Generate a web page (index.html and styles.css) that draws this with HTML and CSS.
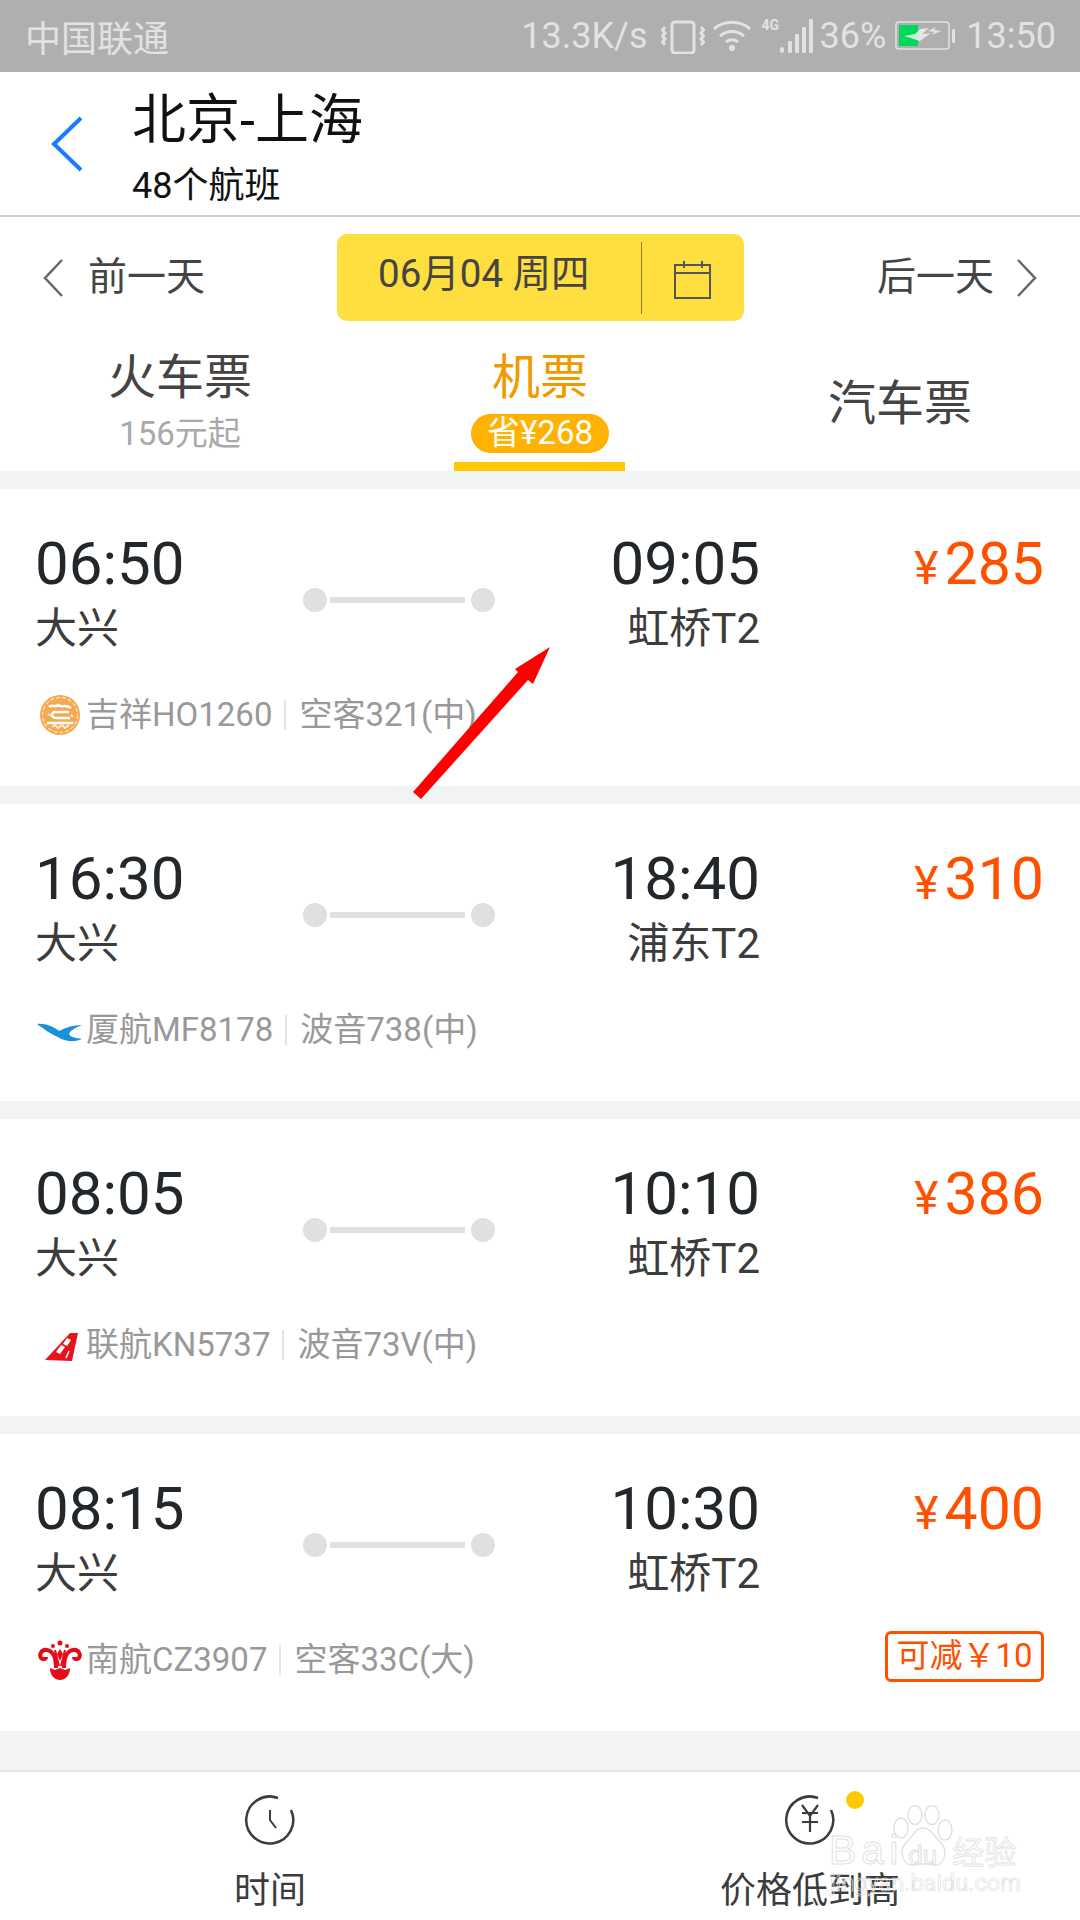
FILE: index.html
```html
<!DOCTYPE html>
<html lang="zh">
<head>
<meta charset="utf-8">
<title>北京-上海</title>
<link rel="stylesheet" href="styles.css">
</head>
<body>
<div class="page">
  <div class="status">
    <span class="carrier">中国联通</span>
    <div class="status-right">
      <span class="speed">13.3K/s</span>
      <svg class="si-vib" width="44" height="34" viewBox="0 0 44 34" fill="none" stroke="#e2e2e2" stroke-width="3"><rect x="11" y="2" width="22" height="31" rx="3"/><path d="M4 7l-2.500 3 2.500 3-2.500 3 2.500 3-2.500 3 2.500 3M40 7l2.500 3-2.500 3 2.500 3-2.500 3 2.500 3-2.500 3"/></svg>
      <svg class="si-wifi" width="40" height="32" viewBox="0 0 40 32" fill="none" stroke="#e2e2e2" stroke-width="3"><path d="M2 9c10-9 26-9 36 0M8 16c7-6 17-6 24 0M14 22c3-3 9-3 12 0"/><circle cx="20" cy="28" r="3" fill="#e2e2e2" stroke="none"/></svg>
      <span class="net">4G</span>
      <svg class="si-sig" width="34" height="34" viewBox="0 0 34 34" fill="#e2e2e2"><rect x="0" y="28" width="4" height="6" rx="2"/><rect x="8" y="22" width="4" height="12" rx="1"/><rect x="15" y="15" width="4" height="19" rx="1"/><rect x="22" y="8" width="4" height="26" rx="1"/><rect x="29" y="0" width="4" height="34" rx="1"/></svg>
      <span class="pct">36%</span>
      <svg class="si-bat" width="60" height="30" viewBox="0 0 60 30"><rect x="1" y="1" width="53" height="27" rx="3" fill="none" stroke="#e2e2e2" stroke-width="1.500"/><rect x="4" y="4" width="19" height="21" fill="#00d85c"/><path d="M9 15l16 5 11-8-9 1 7-6-9 1-5 5z" fill="#e8f5ec" opacity=".85"/><path d="M33 10l8-4-2 3 7 1-9 4 2-3z" fill="#e2e2e2"/><rect x="57" y="8" width="3" height="14" rx="1.500" fill="#e2e2e2"/></svg>
      <span class="clock">13:50</span>
    </div>
  </div>

  <header class="head">
    <svg class="back" width="34" height="56" viewBox="0 0 34 56" fill="none" stroke="#1a7bff" stroke-width="4"><path d="M31 2L4 28l27 26"/></svg>
    <div class="head-text">
      <div class="title">北京-上海</div>
      <div class="subtitle">48个航班</div>
    </div>
  </header>

  <div class="dates">
    <div class="day">
      <svg width="22" height="38" viewBox="0 0 22 38" fill="none" stroke="#666" stroke-width="2.500"><path d="M20 1L3 19l17 18"/></svg>
      <span class="day-text">前一天</span>
    </div>
    <div class="pill">
      <span class="pill-date">06月04 周四</span>
      <span class="pill-cal">
        <svg width="38" height="38" viewBox="0 0 38 38" fill="none" stroke="#555" stroke-width="2"><path d="M1 4h35v33H1zM1 12h35M10 0v7M28 0v7"/></svg>
      </span>
    </div>
    <div class="day day-next">
      <span class="day-text">后一天</span>
      <svg width="22" height="38" viewBox="0 0 22 38" fill="none" stroke="#666" stroke-width="2.500"><path d="M2 1l17 18L2 37"/></svg>
    </div>
  </div>

  <nav class="tabs">
    <div class="tab">
      <div class="tab-name">火车票</div>
      <div class="tab-note">156元起</div>
    </div>
    <div class="tab tab-on">
      <div class="tab-name">机票</div>
      <div class="tab-save">省¥268</div>
      <div class="tab-bar"></div>
    </div>
    <div class="tab tab-solo">
      <div class="tab-name">汽车票</div>
    </div>
  </nav>

  <section class="card">
    <div class="row">
      <div class="dep"><div class="time">06:50</div><div class="port">大兴</div></div>
      <div class="route"><i class="dot"></i><i class="line"></i><i class="dot"></i></div>
      <div class="arr"><div class="time">09:05</div><div class="port">虹桥T2</div></div>
      <div class="price"><span class="yen">¥</span>285</div>
    </div>
    <div class="meta">
      <svg class="logo" width="40" height="40" viewBox="0 0 40 40"><circle cx="20" cy="20" r="20" fill="#f2a94f"/><circle cx="20" cy="20" r="17.500" fill="none" stroke="#fbdcb2" stroke-width="1.500" stroke-dasharray="4 2"/><path d="M7 28h26M9 12c4-3 6 1 9-2 3 3 8-1 13 3M29 17H15c-4 0-4 6 1 6h14" fill="none" stroke="#fff" stroke-width="2.500"/><path d="M12 32l3-2 3 3 4-3 3 3 4-3M8 19l3 2M31 20l2 2" fill="none" stroke="#fde9cf" stroke-width="2"/></svg>
      <span>吉祥HO1260</span><i class="sep"></i><span>空客321(中)</span>
    </div>
  </section>

  <section class="card">
    <div class="row">
      <div class="dep"><div class="time">16:30</div><div class="port">大兴</div></div>
      <div class="route"><i class="dot"></i><i class="line"></i><i class="dot"></i></div>
      <div class="arr"><div class="time">18:40</div><div class="port">浦东T2</div></div>
      <div class="price"><span class="yen">¥</span>310</div>
    </div>
    <div class="meta">
      <svg class="logo" width="40" height="40" viewBox="0 0 40 40"><path d="M-3 14C5 13 14 17 19 21 26 17 34 15 42 15 34 18 30 21 29 24 30 27 36 28 42 29 32 33 24 31 18 27 12 25 4 19-3 14z" fill="#1a8fdc"/></svg>
      <span>厦航MF8178</span><i class="sep"></i><span>波音738(中)</span>
    </div>
  </section>

  <section class="card">
    <div class="row">
      <div class="dep"><div class="time">08:05</div><div class="port">大兴</div></div>
      <div class="route"><i class="dot"></i><i class="line"></i><i class="dot"></i></div>
      <div class="arr"><div class="time">10:10</div><div class="port">虹桥T2</div></div>
      <div class="price"><span class="yen">¥</span>386</div>
    </div>
    <div class="meta">
      <svg class="logo" width="40" height="40" viewBox="0 0 40 40"><path d="M5 35L30 8h8l-6 28z" fill="#e8141c"/><path d="M16 27l5-7 4 2-5 7zM23 19l4-6 4 2-4 6z" fill="#fff"/><path d="M26 33l3-7" stroke="#fff" stroke-width="1.500"/></svg>
      <span>联航KN5737</span><i class="sep"></i><span>波音73V(中)</span>
    </div>
  </section>

  <section class="card">
    <div class="row">
      <div class="dep"><div class="time">08:15</div><div class="port">大兴</div></div>
      <div class="route"><i class="dot"></i><i class="line"></i><i class="dot"></i></div>
      <div class="arr"><div class="time">10:30</div><div class="port">虹桥T2</div></div>
      <div class="price"><span class="yen">¥</span>400</div>
    </div>
    <div class="meta">
      <svg class="logo" width="40" height="40" viewBox="0 0 40 40" fill="none" stroke="#e60b18"><path d="M16 28C16 18 13 11 7 10 1 9-1 15 1 18 3 20 6 19 6 17" stroke-width="4"/><path d="M24 28C24 18 27 11 33 10 39 9 41 15 39 18 37 20 34 19 34 17" stroke-width="4"/><path d="M19 26L15 10M21 26L25 10" stroke-width="2"/><circle cx="20" cy="3" r="2.500" fill="#e60b18" stroke="none"/><circle cx="13" cy="6" r="2" fill="#e60b18" stroke="none"/><circle cx="27" cy="6" r="2" fill="#e60b18" stroke="none"/><path d="M20 9l3 5-3 7-3-7z" fill="#e60b18" stroke="none"/><path d="M10 28l5 2 5-2 5 2 5-2c0 8-5 12-10 12S10 36 10 28z" fill="#e60b18" stroke="none"/></svg>
      <span>南航CZ3907</span><i class="sep"></i><span>空客33C(大)</span>
      <span class="tag">可减￥10</span>
    </div>
  </section>

  <div class="spacer"></div>

  <footer class="foot">
    <div class="foot-item">
      <svg width="50" height="50" viewBox="0 0 50 50" fill="none" stroke="#3c3c3c" stroke-width="2.500"><path d="M33 3A23.500 23.500 0 1 0 46 15"/><path d="M25 15V25L31 33" stroke-width="2"/></svg>
      <span>时间</span>
    </div>
    <div class="foot-item">
      <span class="foot-icon">
        <svg width="50" height="50" viewBox="0 0 50 50" fill="none" stroke="#3c3c3c" stroke-width="2.500"><path d="M33 3A23.500 23.500 0 1 0 46 15"/><path d="M17 10l8 11 8-11M17 18h16M17 27h16M25 21v16" stroke-width="2.200"/></svg>
        <i class="badge"></i>
      </span>
      <span>价格低到高</span>
    </div>
  </footer>

  <svg class="arrow" width="145" height="158" viewBox="0 0 145 158"><path d="M140 4L123 41 118 37 11 156 3 149 108 29 105 26z" fill="#ff0000"/></svg>

  <div class="mark">
    <svg class="paw" width="60" height="63" viewBox="0 0 60 63" fill="none" stroke="#e2e2e2" stroke-width="1.500"><ellipse cx="8" cy="23" rx="7" ry="10"/><ellipse cx="22" cy="10" rx="7" ry="9.500"/><ellipse cx="39" cy="10" rx="7" ry="9.500"/><ellipse cx="52" cy="25" rx="7" ry="10"/><path d="M30 23c-8 0-10 8-17 15-8 8-3 23 8 22 6-1 12-2 19 0 11 2 16-13 8-22-7-7-10-15-18-15z"/></svg>
    <div class="mark-word"><span class="mark-b">Bai</span><span class="mark-d">du</span><span class="mark-j">经验</span></div>
    <div class="mark-url">jingyan.baidu.com</div>
  </div>
</div>
</body>
</html>
```
FILE: styles.css
```css
* { box-sizing: border-box; }
html, body { margin: 0; padding: 0; }
body { font-family: Roboto, "Noto Sans CJK SC", sans-serif; background: #f2f3f5; }
i { display: block; font-style: normal; }
.page { position: relative; width: 1080px; height: 1920px; overflow: hidden; background: #f2f3f5; }

.status { height: 72px; background: #afafaf; color: #e2e2e2; display: flex; align-items: center; justify-content: space-between; padding: 0 24px 0 25px; font-size: 36px; }
.status-right { display: flex; align-items: center; font-size: 36px; }
.speed { margin-right: 13px; }
.si-vib { margin-right: 7px; margin-top: 2px; }
.si-wifi { margin-right: 10px; }
.net { font-size: 14px; font-weight: 700; width: 18px; margin-top: -22px; }
.si-sig { margin-right: 6px; margin-top: -1px; }
.si-bat { margin: 0 11px 0 9px; }

.head { height: 145px; background: #fff; border-bottom: 2px solid #cfcfcf; display: flex; align-items: center; padding-left: 50px; }
.back { margin-right: 48px; }
.head-text { padding-top: 10px; }
.title { font-size: 54px; line-height: 64px; color: #111; }
.subtitle { font-size: 36px; line-height: 44px; color: #111; margin-top: 11px; }

.dates { height: 104px; background: #fff; padding: 17px 42px 0 42px; display: flex; align-items: flex-start; justify-content: space-between; }
.day { width: 294px; height: 87px; display: flex; align-items: center; gap: 24px; font-size: 39px; color: #444; }
.day-text { padding-bottom: 9px; }
.day-next { width: 293px; justify-content: flex-end; gap: 22px; }
.pill { width: 407px; height: 87px; background: #ffde3f; border-radius: 10px; display: flex; align-items: center; }
.pill-date { width: 305px; height: 72px; line-height: 64px; padding-left: 41px; font-size: 38.500px; color: #444; border-right: 1px solid #8f7f2c; white-space: nowrap; }
.pill-cal { flex: 1; display: flex; justify-content: center; margin-top: 4px; }

.tabs { height: 150px; background: #fff; display: grid; grid-template-columns: repeat(3, 360px); text-align: center; }
.tab { position: relative; padding-top: 27px; }
.tab-name { font-size: 48px; line-height: 60px; color: #444; }
.tab-note { font-size: 33px; line-height: 40px; color: #a9a9a9; margin-top: 6px; }
.tab-on .tab-name { color: #f09a00; }
.tab-save { width: 138px; height: 39px; line-height: 38px; margin: 6px auto 0; border-radius: 20px; background: #ffb200; color: #fff; font-size: 33px; }
.tab-bar { position: absolute; left: 94px; bottom: 0; width: 171px; height: 9px; background: #ffc800; }
.tab-solo { padding-top: 53px; }

.card { height: 297px; margin-top: 18px; background: #fff; padding: 41px 36px 0 35px; }
.row { display: flex; align-items: flex-start; height: 139px; }
.dep { width: 268px; }
.arr { width: 265px; text-align: right; }
.time { font-size: 60px; line-height: 68px; color: #22272b; }
.port { font-size: 42px; line-height: 50px; color: #3c3c3c; margin-top: 6px; }
.route { width: 192px; height: 24px; margin-top: 58px; display: flex; align-items: center; gap: 3px; }
.dot { width: 24px; height: 24px; border-radius: 50%; background: #e0e0e0; flex: none; }
.line { flex: 1; height: 6px; background: #e0e0e0; margin-right: 3px; }
.price { flex: 1; text-align: right; font-size: 59px; line-height: 68px; color: #ff5000; white-space: nowrap; }
.yen { font-size: 46px; margin-right: 6px; }
.meta { position: relative; display: flex; align-items: center; height: 50px; margin-top: 18px; padding-left: 5px; font-size: 33px; color: #999; }
.logo { margin: 6px 6px 0 0; flex: none; overflow: visible; }
.sep { width: 2px; height: 30px; background: #e4e4e4; margin: 6px 13px 0 12px; }
.tag { position: absolute; right: 0; top: -1px; width: 159px; height: 51px; line-height: 43px; text-align: center; border: 3px solid #ff5000; border-radius: 6px; color: #ff5000; font-size: 33px; }

.spacer { height: 18px; }
.foot { position: absolute; left: 0; bottom: 0; width: 1080px; height: 150px; background: #fff; border-top: 2px solid #e4e4e4; display: grid; grid-template-columns: 540px 540px; font-size: 36px; color: #3c3c3c; text-align: center; }
.foot-item { display: flex; flex-direction: column; align-items: center; padding-top: 23px; gap: 25px; line-height: 42px; }
.foot-icon { position: relative; display: block; height: 50px; }
.foot-icon svg { display: block; }
.badge { position: absolute; left: 61px; top: -4px; width: 18px; height: 18px; border-radius: 50%; background: #ffc800; }

.arrow { position: absolute; left: 410px; top: 643px; }

.mark { position: absolute; left: 829px; top: 1805px; width: 200px; height: 92px; color: transparent; }
.paw { position: absolute; left: 64px; top: 0; }
.mark-word { position: absolute; left: 0; top: 23px; display: flex; align-items: baseline; font-family: "Liberation Sans", sans-serif; -webkit-text-stroke: 1px #e2e2e2; font-size: 41px; line-height: 44px; white-space: nowrap; }
.mark-b { letter-spacing: 5px; }
.mark-d { margin-left: 5px; font-size: 26px; }
.mark-j { margin-left: 15px; font-family: "Noto Sans CJK SC", sans-serif; font-size: 32px; -webkit-text-stroke-width: .8px; }
.mark-url { position: absolute; left: 1px; top: 63px; font-size: 23.500px; line-height: 30px; -webkit-text-stroke: .7px #e2e2e2; white-space: nowrap; }
```
